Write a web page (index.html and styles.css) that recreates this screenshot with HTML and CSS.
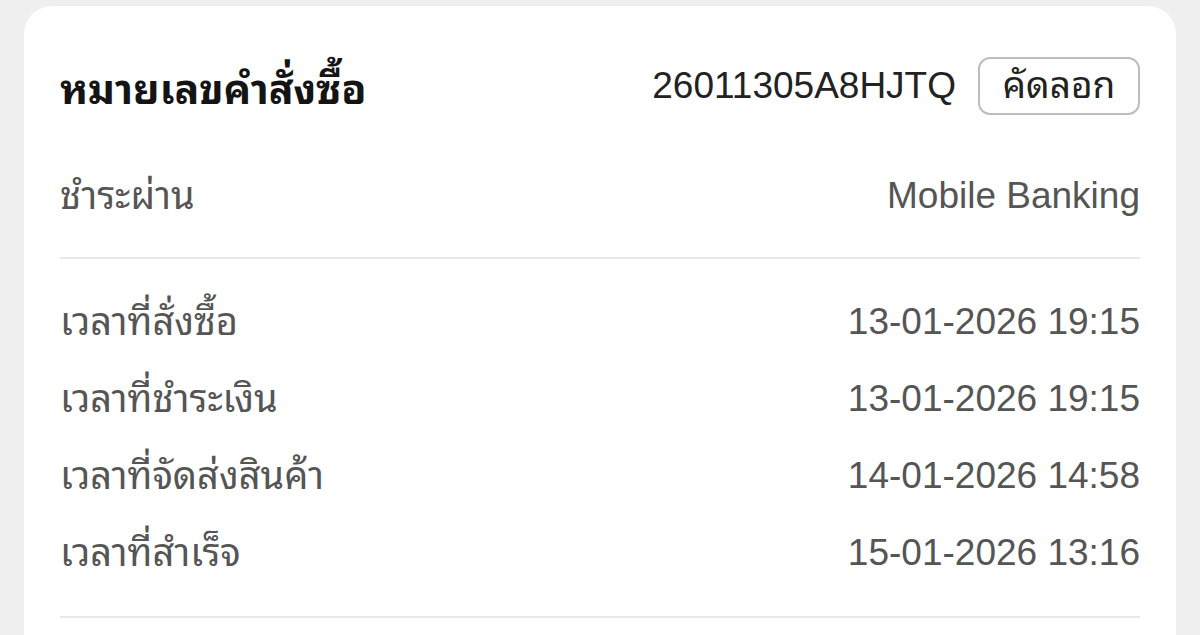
FILE: index.html
```html
<!DOCTYPE html>
<html lang="th">
<head>
<meta charset="utf-8">
<title>Order details</title>
<link rel="stylesheet" href="styles.css">
</head>
<body>
<div class="card">
  <section class="section">
    <div class="header">
      <h1 class="title">หมายเลขคำสั่งซื้อ</h1>
      <div class="order">
        <span class="order-no">26011305A8HJTQ</span>
        <button class="copy-btn">คัดลอก</button>
      </div>
    </div>
    <div class="row pay-row">
      <span class="label">ชำระผ่าน</span>
      <span class="value">Mobile Banking</span>
    </div>
  </section>
  <section class="section times">
    <div class="row"><span class="label">เวลาที่สั่งซื้อ</span><span class="value">13-01-2026 19:15</span></div>
    <div class="row"><span class="label">เวลาที่ชำระเงิน</span><span class="value">13-01-2026 19:15</span></div>
    <div class="row"><span class="label">เวลาที่จัดส่งสินค้า</span><span class="value">14-01-2026 14:58</span></div>
    <div class="row"><span class="label">เวลาที่สำเร็จ</span><span class="value">15-01-2026 13:16</span></div>
  </section>
</div>
</body>
</html>
```

FILE: styles.css
```css
html, body {
  margin: 0;
  padding: 0;
  background: #efefef;
  height: 635px;
  overflow: hidden;
}
body {
  font-family: "Liberation Sans", "Noto Sans Thai Looped", "Noto Sans Thai", "Noto Sans", sans-serif;
  color: #555;
}
.card {
  margin: 6px 24px 0 24px;
  background: #fff;
  border-radius: 28px 28px 0 0;
  padding: 0 36px;
  height: 700px;
}
.section {
  border-bottom: 2px solid #e8e8e8;
}
.header {
  display: flex;
  justify-content: space-between;
  align-items: center;
  padding-top: 51px;
  height: 58px;
}
.title {
  margin: 0;
  font-size: 41px;
  font-weight: 700;
  color: #141414;
  line-height: 44px;
  padding-top: 8px;
}
.order {
  display: flex;
  align-items: center;
  gap: 22px;
}
.order-no {
  font-size: 37px;
  color: #222;
  line-height: 44px;
}
.copy-btn {
  box-sizing: border-box;
  width: 162px;
  height: 58px;
  border: 2px solid #bdbdbd;
  border-radius: 12px;
  background: #fff;
  font-family: inherit;
  font-size: 37px;
  color: #222;
  padding: 0;
  line-height: 54px;
}
.row {
  display: flex;
  justify-content: space-between;
  align-items: center;
  height: 44px;
  line-height: 44px;
}
.pay-row {
  margin-top: 59px;
  margin-bottom: 39px;
}
.label {
  font-size: 38px;
  color: #555;
}
.value {
  font-size: 37px;
  color: #555;
}
.times {
  display: flex;
  flex-direction: column;
  gap: 33px;
  padding-top: 41px;
  padding-bottom: 41px;
}
```
